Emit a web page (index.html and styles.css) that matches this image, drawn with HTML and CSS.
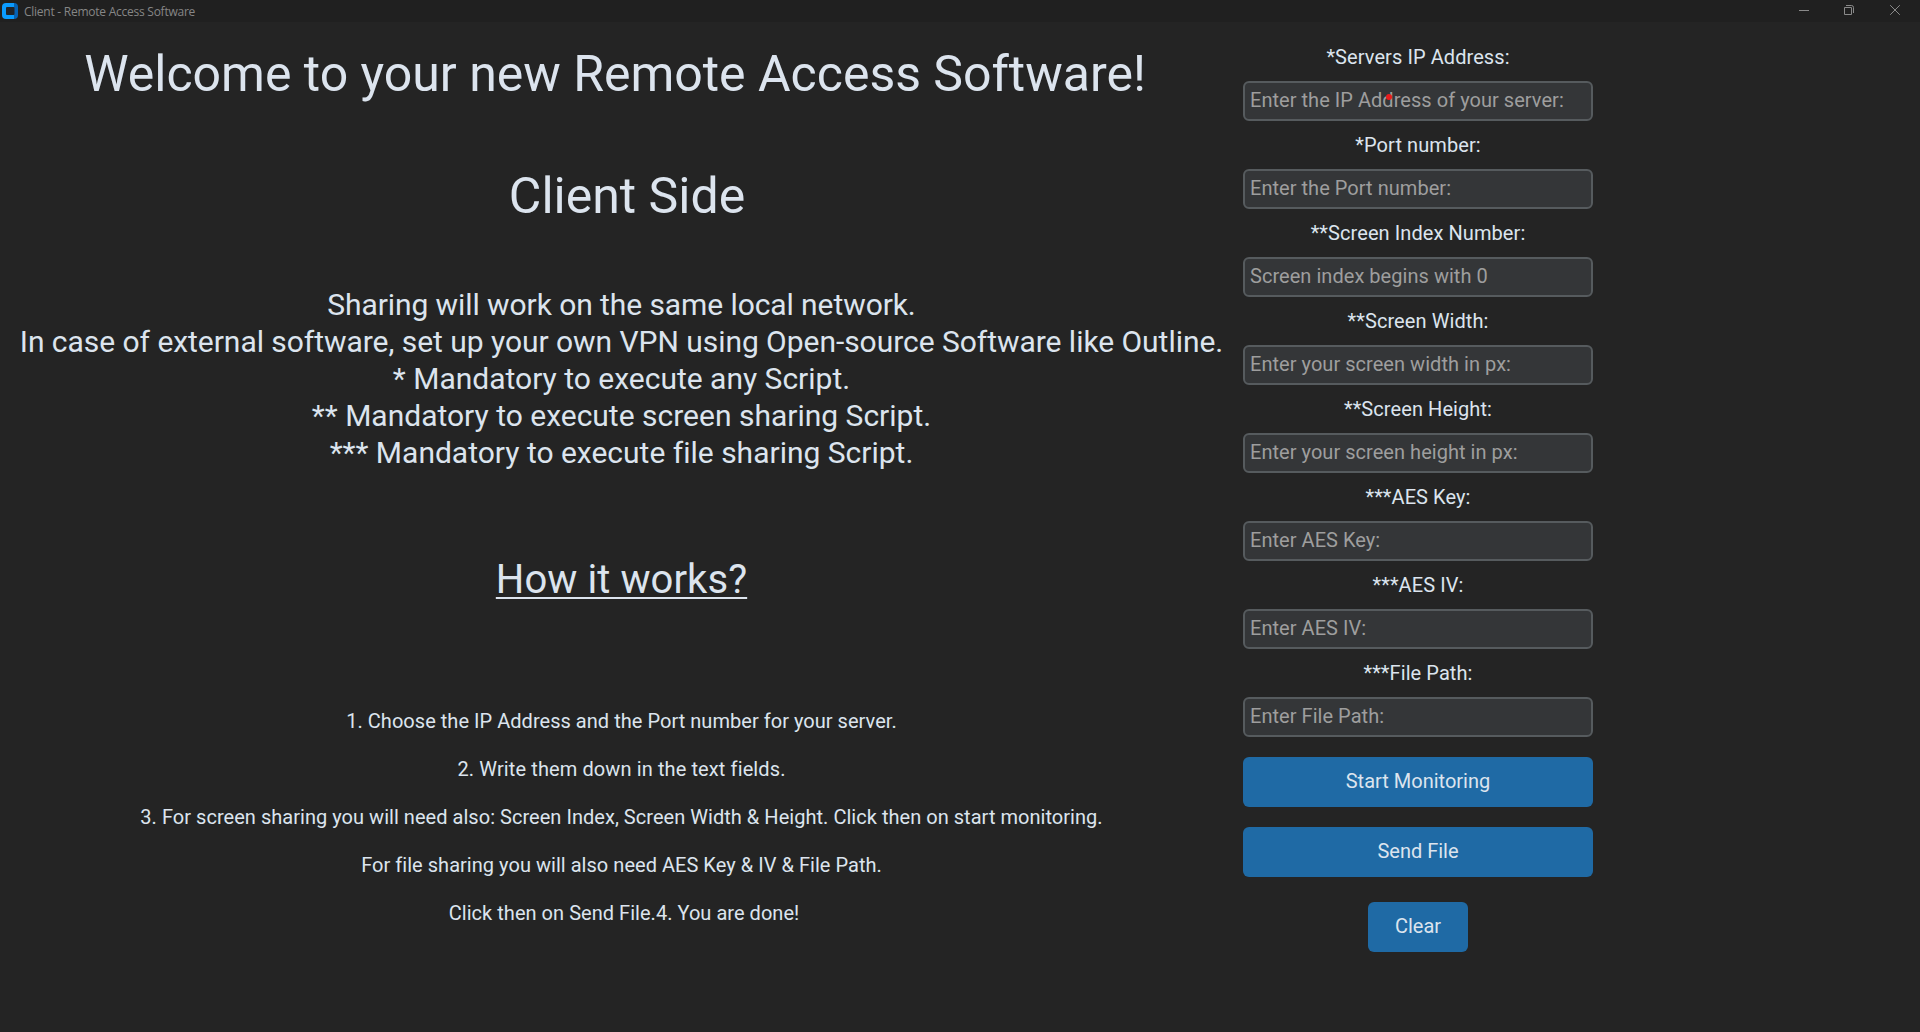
FILE: index.html
```html
<!DOCTYPE html>
<html lang="en">
<head>
<meta charset="utf-8">
<title>Client - Remote Access Software</title>
<link rel="stylesheet" href="styles.css">
</head>
<body>
<header class="titlebar">
<svg class="logo" width="16" height="16" viewBox="0 0 16 16"><path d="M4 0h8v16H4a4 4 0 0 1-4-4V4a4 4 0 0 1 4-4z" fill="#0a9bff"/><path d="M12 0a4 4 0 0 1 4 4v8a4 4 0 0 1-4 4z" fill="#0662b5"/><rect x="4" y="4" width="8.500" height="8" rx="1" fill="#20242a"/></svg>
<span class="title">Client - Remote Access Software</span>
<svg class="controls" width="120" height="22" viewBox="0 0 120 22" fill="none" stroke="#8a8a8a"><path d="M9 10.500h10M54.500 7.500h7v7h-7zM56 5.500h5.500q2 0 2 2V13M100.200 5.200l9.600 9.600M109.800 5.200l-9.600 9.600"/></svg>
</header>
<main class="layout">
<section class="intro">
<h1>Welcome to your new Remote Access Software!</h1>
<h2>Client Side</h2>
<div class="notes">
<p class="lead">Sharing will work on the same local network.</p>
<p class="vpn">In case of external software, set up your own VPN using Open-source Software like Outline.</p>
<p>* Mandatory to execute any Script.</p>
<p>** Mandatory to execute screen sharing Script.</p>
<p>*** Mandatory to execute file sharing Script.</p>
</div>
<h3>How it works?</h3>
<div class="steps">
<p>1. Choose the IP Address and the Port number for your server.</p>
<p class="write">2. Write them down in the text fields.</p>
<p>3. For screen sharing you will need also: Screen Index, Screen Width &amp; Height. Click then on start monitoring.</p>
<p>For file sharing you will also need AES Key &amp; IV &amp; File Path.</p>
<p class="done">Click then on Send File.4. You are done!</p>
</div>
</section>
<form class="form">
<label for="ip">*Servers IP Address:</label><div class="field"><input id="ip" placeholder="Enter the IP Address of your server:"><i class="dot"></i></div>
<label for="port">*Port number:</label><input id="port" placeholder="Enter the Port number:">
<label for="index">**Screen Index Number:</label><input id="index" placeholder="Screen index begins with 0">
<label for="width">**Screen Width:</label><input id="width" placeholder="Enter your screen width in px:">
<label for="height">**Screen Height:</label><input id="height" placeholder="Enter your screen height in px:">
<label for="key">***AES Key:</label><input id="key" placeholder="Enter AES Key:">
<label for="iv">***AES IV:</label><input id="iv" placeholder="Enter AES IV:">
<label for="file">***File Path:</label><input id="file" placeholder="Enter File Path:">
<button type="button">Start Monitoring</button>
<button type="button">Send File</button>
<button type="button" class="clear">Clear</button>
</form>
</main>
</body>
</html>
```
FILE: styles.css
```css
* { box-sizing: border-box; }
body { margin: 0; height: 1032px; overflow: hidden; background: #242424; color: #dce4ee; font-family: Roboto, sans-serif; font-variant-ligatures: none; }
.titlebar { height: 22px; display: flex; align-items: center; padding: 0 10px 0 2px; background: #202020; color: #868686; }
.logo { margin-right: 6px; }
.title { font: 12px "Open Sans", sans-serif; letter-spacing: -0.25px; }
.controls { margin-left: auto; }
.layout { display: flex; }
.intro { width: 1243px; text-align: center; white-space: nowrap; }
h1, h2, h3, p { margin: 0; font-weight: 400; }
h1 { font-size: 50px; line-height: 60px; padding: 22px 13px 0 0; letter-spacing: -0.02px; }
h2 { font-size: 50px; line-height: 60px; padding: 62px 0 0 11px; }
.notes { margin-top: 60px; font-size: 30px; line-height: 37px; }
.lead { letter-spacing: -0.08px; }
.vpn { letter-spacing: -0.04px; }
h3 { margin-top: 85px; font-size: 40px; line-height: 48px; letter-spacing: 0.08px; text-decoration: underline; text-decoration-thickness: 2px; text-underline-offset: 4px; }
.steps { margin-top: 93px; font-size: 20px; line-height: 48px; letter-spacing: 0.035px; }
.write { letter-spacing: 0.11px; }
.done { padding-left: 5px; }
.form { width: 350px; display: flex; flex-direction: column; align-items: center; padding-top: 21px; }
label { height: 28px; line-height: 28px; margin-bottom: 10px; font-size: 20px; letter-spacing: 0.08px; }
.form input { width: 350px; height: 40px; margin: 0 0 10px; padding: 0 5px 2px; border: 2px solid #565b5e; border-radius: 6px; background: #343638; font: 20px Roboto, sans-serif; letter-spacing: 0.04px; }
.form input::placeholder { color: #9e9e9e; opacity: 1; }
.field { position: relative; }
.field input { display: block; }
.dot { position: absolute; left: 143px; top: 13px; width: 6px; height: 6px; border-radius: 50%; background: #e91c1c; }
button { width: 350px; height: 50px; margin: 10px 0; padding: 0 0 2px; border: 0; border-radius: 6px; background: #1f6aa5; color: #dce4ee; font: 20px Roboto, sans-serif; }
.clear { width: 100px; margin-top: 15px; }
```
